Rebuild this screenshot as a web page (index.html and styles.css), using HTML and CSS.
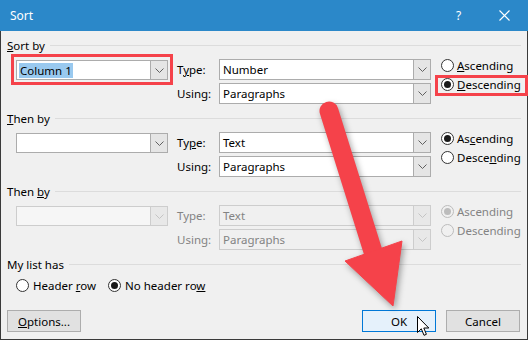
FILE: index.html
```html
<!DOCTYPE html>
<html lang="en">
<head>
    <meta charset="UTF-8">
    <title>Sort</title>
    <link rel="stylesheet" href="styles.css">
</head>
<body>
    <div class="dialog">
        <!-- Title bar -->
        <div class="titlebar">
            <span class="title">Sort</span>
            <span class="help">?</span>
            <svg class="close" width="11" height="11" viewBox="0 0 11 11">
                <path d="M0.5 0.5 L10.5 10.5 M10.5 0.5 L0.5 10.5" stroke="#fff" stroke-width="1.1"/>
            </svg>
        </div>

        <div class="content">
            <!-- Sort by -->
            <section class="group">
                <div class="group-head"><span><u>S</u>ort by</span><i></i></div>
                <div class="sort-row">
                    <div class="combo key marked">
                        <div class="value"><span class="selected">Column 1</span></div>
                        <div class="drop"><svg width="9" height="5" viewBox="0 0 9 5"><path d="M0.5 0.5 L4.5 4.5 L8.5 0.5" fill="none" stroke="#606060"/></svg></div>
                    </div>
                    <label class="field-label">T<u>y</u>pe:</label>
                    <div class="combo field">
                        <div class="value">Number</div>
                        <div class="drop"><svg width="9" height="5" viewBox="0 0 9 5"><path d="M0.5 0.5 L4.5 4.5 L8.5 0.5" fill="none" stroke="#606060"/></svg></div>
                    </div>
                    <div class="order">
                        <label class="radio"><span class="dot"></span><span><u>A</u>scending</span></label>
                        <label class="radio checked marked"><span class="dot"></span><span><u>D</u>escending</span></label>
                    </div>
                    <label class="field-label second">Using:</label>
                    <div class="combo field second">
                        <div class="value">Paragraphs</div>
                        <div class="drop"><svg width="9" height="5" viewBox="0 0 9 5"><path d="M0.5 0.5 L4.5 4.5 L8.5 0.5" fill="none" stroke="#606060"/></svg></div>
                    </div>
                </div>
            </section>

            <!-- Then by -->
            <section class="group">
                <div class="group-head"><span><u>T</u>hen by</span><i></i></div>
                <div class="sort-row">
                    <div class="combo key">
                        <div class="value"></div>
                        <div class="drop"><svg width="9" height="5" viewBox="0 0 9 5"><path d="M0.5 0.5 L4.5 4.5 L8.5 0.5" fill="none" stroke="#606060"/></svg></div>
                    </div>
                    <label class="field-label">Ty<u>p</u>e:</label>
                    <div class="combo field">
                        <div class="value">Text</div>
                        <div class="drop"><svg width="9" height="5" viewBox="0 0 9 5"><path d="M0.5 0.5 L4.5 4.5 L8.5 0.5" fill="none" stroke="#606060"/></svg></div>
                    </div>
                    <div class="order">
                        <label class="radio checked"><span class="dot"></span><span>As<u>c</u>ending</span></label>
                        <label class="radio"><span class="dot"></span><span>Desce<u>n</u>ding</span></label>
                    </div>
                    <label class="field-label second">Using:</label>
                    <div class="combo field second">
                        <div class="value">Paragraphs</div>
                        <div class="drop"><svg width="9" height="5" viewBox="0 0 9 5"><path d="M0.5 0.5 L4.5 4.5 L8.5 0.5" fill="none" stroke="#606060"/></svg></div>
                    </div>
                </div>
            </section>

            <!-- Then by (disabled) -->
            <section class="group disabled">
                <div class="group-head"><span>Then <u>b</u>y</span><i></i></div>
                <div class="sort-row">
                    <div class="combo key">
                        <div class="value"></div>
                        <div class="drop"><svg width="9" height="5" viewBox="0 0 9 5"><path d="M0.5 0.5 L4.5 4.5 L8.5 0.5" fill="none" stroke="#c4c4c4"/></svg></div>
                    </div>
                    <label class="field-label">Type:</label>
                    <div class="combo field">
                        <div class="value">Text</div>
                        <div class="drop"><svg width="9" height="5" viewBox="0 0 9 5"><path d="M0.5 0.5 L4.5 4.5 L8.5 0.5" fill="none" stroke="#c4c4c4"/></svg></div>
                    </div>
                    <div class="order">
                        <label class="radio checked"><span class="dot"></span><span>Ascending</span></label>
                        <label class="radio"><span class="dot"></span><span>Descending</span></label>
                    </div>
                    <label class="field-label second">Using:</label>
                    <div class="combo field second">
                        <div class="value">Paragraphs</div>
                        <div class="drop"><svg width="9" height="5" viewBox="0 0 9 5"><path d="M0.5 0.5 L4.5 4.5 L8.5 0.5" fill="none" stroke="#c4c4c4"/></svg></div>
                    </div>
                </div>
            </section>

            <!-- My list has -->
            <section class="group">
                <div class="group-head"><span>My list has</span><i></i></div>
                <div class="header-opts">
                    <label class="radio"><span class="dot"></span><span>Header <u>r</u>ow</span></label>
                    <label class="radio checked"><span class="dot"></span><span>No header ro<u>w</u></span></label>
                </div>
            </section>

            <!-- Buttons -->
            <div class="buttons">
                <button class="btn"><u>O</u>ptions...</button>
                <button class="btn default">OK</button>
                <button class="btn">Cancel</button>
            </div>
        </div>

        <!-- Annotation arrow -->
        <svg class="arrow" width="528" height="340" viewBox="0 0 528 340">
            <g fill="#f5424a" stroke="#f5424a">
                <line x1="329" y1="111" x2="375" y2="258" stroke-width="19" stroke-linecap="round"/>
                <polygon points="345,261 402,241 393,306" stroke-width="1" stroke-linejoin="round"/>
            </g>
        </svg>

        <!-- Mouse cursor -->
        <svg class="cursor" width="14" height="21" viewBox="0 0 14 21">
            <path d="M0.5 0.5 L0.5 16.5 L4.3 12.8 L7 19.3 L9.4 18.3 L6.8 12 L11.8 12 Z" fill="#fff" stroke="#000" stroke-width="1" stroke-linejoin="round"/>
        </svg>
    </div>
</body>
</html>
```

FILE: styles.css
```css
* {
    margin: 0;
    padding: 0;
    box-sizing: border-box;
}

body {
    font-family: "Noto Sans", "Open Sans", sans-serif;
    font-size: 11.5px;
    color: #000;
    background: #f0f0f0;
}

u {
    text-decoration: underline;
    text-underline-offset: 1px;
}

/* Window */
.dialog {
    position: relative;
    width: 528px;
    height: 340px;
    background: #f0f0f0;
    border: 1px solid #3a3a3a;
    border-top: none;
}

.titlebar {
    height: 31px;
    margin: 0 -1px;
    background: #2b88c9;
    color: #fff;
    font-size: 12px;
    display: flex;
    align-items: center;
    padding-left: 10px;
}

.title {
    flex: 1;
}

.help {
    width: 10px;
    margin-right: 33px;
}

.close {
    margin-right: 18px;
}

.content {
    padding: 7px 6px 0 6px;
}

/* Group header with separator */
.group + .group {
    margin-top: 7px;
}

.group-head {
    height: 14px;
    display: flex;
    align-items: center;
    gap: 5px;
}

.group-head i {
    flex: 1;
    height: 1px;
    background: #dcdcdc;
}

/* Sort rows */
.sort-row {
    display: grid;
    grid-template-columns: 152px 51px 212px 1fr;
    grid-template-rows: 21px 21px;
    row-gap: 3px;
    margin: 7px 0 0 9px;
}

.sort-row .key {
    grid-column: 1;
    grid-row: 1;
}

.sort-row .field-label {
    grid-column: 2;
    grid-row: 1;
}

.sort-row .field {
    grid-column: 3;
    grid-row: 1;
}

.sort-row .second {
    grid-row: 2;
}

.field-label {
    padding-left: 9px;
    line-height: 21px;
}

.combo {
    display: flex;
    height: 21px;
    border: 1px solid #acacac;
    background: #fff;
}

.combo .value {
    flex: 1;
    padding-left: 3px;
    line-height: 19px;
    white-space: nowrap;
    overflow: hidden;
}

.combo .drop {
    width: 17px;
    background: #e5e5e5;
    border-left: 1px solid #acacac;
    display: flex;
    align-items: center;
    justify-content: center;
}

.combo.key {
    height: 20px;
    margin-top: 1px;
}

.combo.key .value {
    padding-left: 2px;
    line-height: 18px;
}

.selected {
    display: inline-block;
    background: #99c9ef;
    line-height: 15px;
    padding: 0 1px;
    vertical-align: middle;
}

/* Red annotation boxes */
.marked {
    position: relative;
}

.combo.marked::after {
    content: "";
    position: absolute;
    top: -7px;
    bottom: -6px;
    left: -6px;
    right: -6px;
    border: 3px solid #f5424a;
}

.radio.marked::after {
    content: "";
    position: absolute;
    top: 0;
    bottom: -2px;
    left: -6px;
    right: -7px;
    border: 3px solid #f5424a;
}

/* Radios */
.order {
    grid-row: 1 / 3;
    grid-column: 4;
    margin: -3px 0 0 10px;
    display: flex;
    flex-direction: column;
    align-items: flex-start;
}

.radio {
    display: inline-flex;
    align-items: center;
    gap: 3px;
    height: 19px;
}

.dot {
    width: 13px;
    height: 13px;
    border: 1px solid #333;
    border-radius: 50%;
    background: #fff;
    display: flex;
    align-items: center;
    justify-content: center;
}

.radio.checked .dot::after {
    content: "";
    width: 7px;
    height: 7px;
    border-radius: 50%;
    background: #1a1a1a;
}

/* Disabled group */
.disabled .field-label,
.disabled .radio,
.disabled .combo {
    color: #838383;
}

.disabled .combo {
    border-color: #cdcdcd;
    background: #f0f0f0;
}

.disabled .combo.key {
    background: #f6f6f6;
}

.disabled .combo .drop {
    background: #e8e8e8;
    border-left-color: #cdcdcd;
}

.disabled .dot {
    border-color: #bcbcbc;
    background: #f0f0f0;
}

.disabled .radio.checked .dot::after {
    background: #bcbcbc;
}

/* Header row options */
.header-opts {
    display: flex;
    gap: 12px;
    margin: 5px 0 0 9px;
}

.header-opts .radio {
    gap: 4px;
}

/* Buttons */
.buttons {
    display: flex;
    gap: 10px;
    margin-top: 15px;
    padding-right: 1px;
}

.btn {
    width: 74px;
    height: 22px;
    border: 1px solid #adadad;
    background: #e1e1e1;
    font-family: inherit;
    font-size: 11.5px;
    color: #000;
}

.btn.default {
    margin-left: auto;
    border-color: #0078d7;
    background: #e5f1fb;
}

/* Overlays */
.arrow {
    position: absolute;
    top: 0;
    left: -1px;
    pointer-events: none;
    filter: drop-shadow(2px 3px 3px rgba(0, 0, 0, 0.35));
}

.cursor {
    position: absolute;
    top: 316px;
    left: 416px;
    pointer-events: none;
}
```
